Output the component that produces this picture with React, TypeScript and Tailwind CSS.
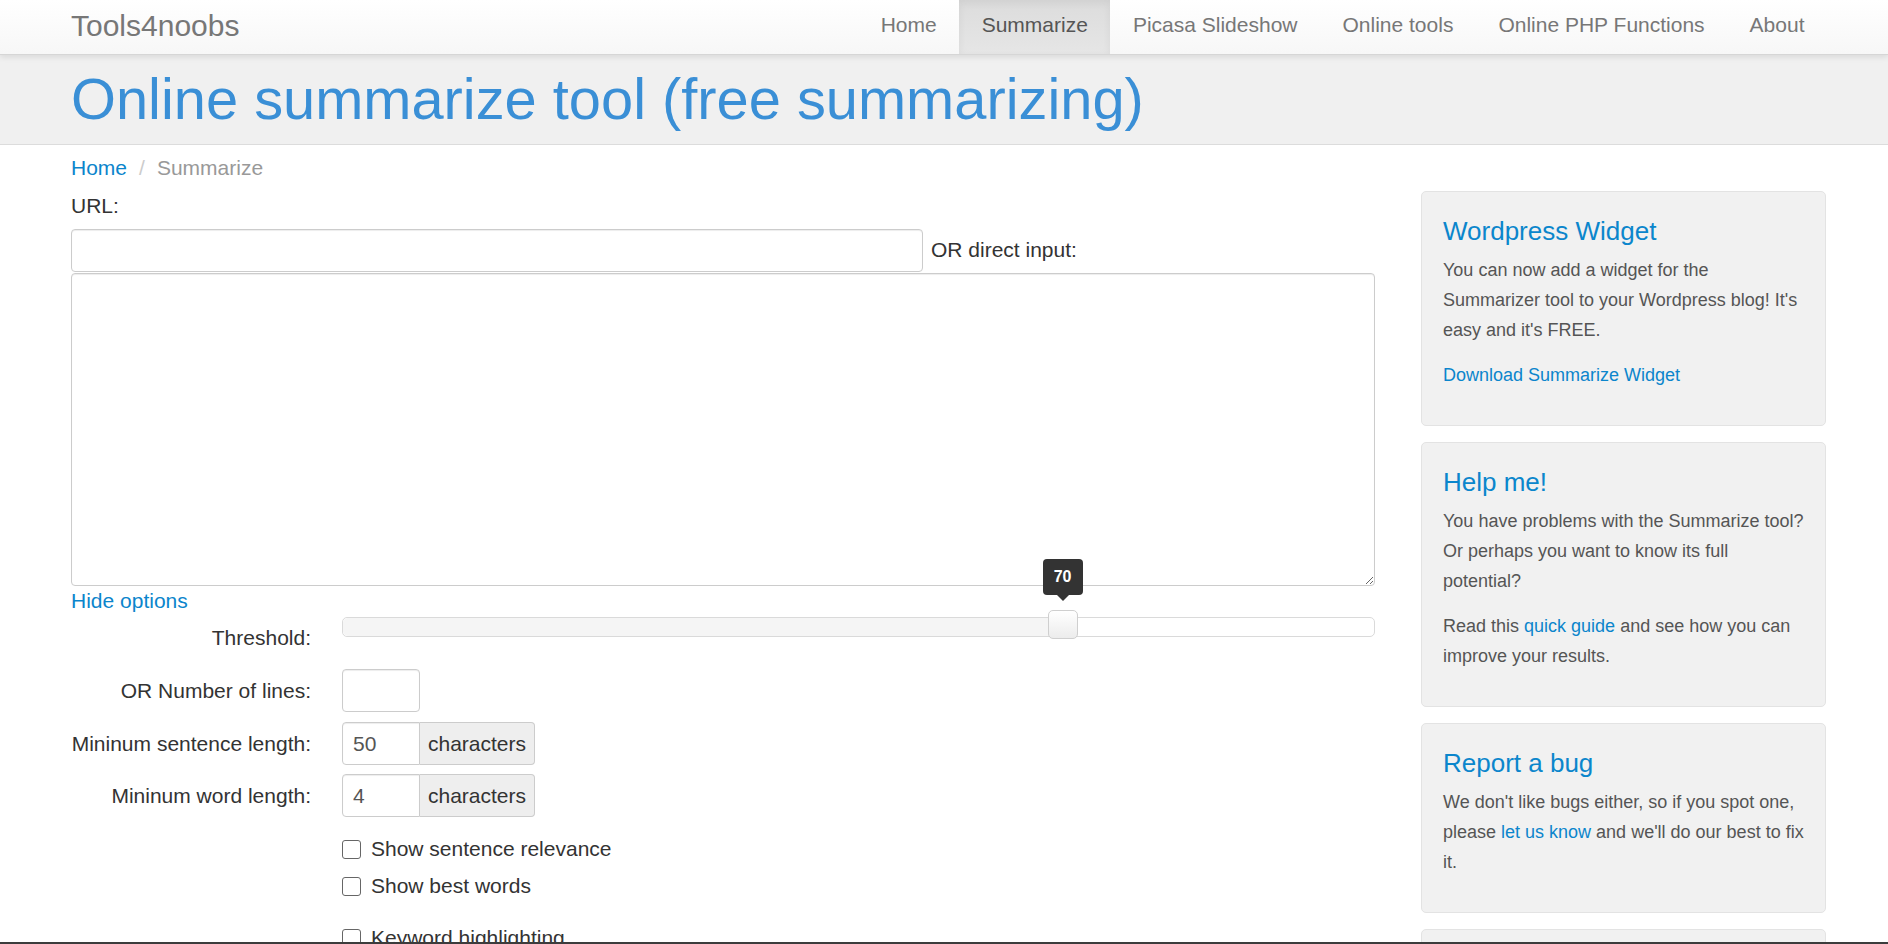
import React from "react";

function NavItem({ label, active }: { label: string; active?: boolean }) {
  return (
    <li
      className={
        active
          ? "flex items-center pb-[4px] px-[22.5px] text-[21px] text-[#555] bg-linear-to-b from-[#dcdcdc] to-[#e6e6e6] shadow-[inset_0_3px_9px_rgba(0,0,0,0.06)]"
          : "flex items-center pb-[4px] px-[22.5px] text-[21px] text-[#777]"
      }
    >
      {label}
    </li>
  );
}

function Well({ title, children, className }: { title?: string; children?: React.ReactNode; className?: string }) {
  return (
    <div
      className={
        "border border-[#e3e3e3] rounded-[5px] bg-[#f1f1f1] pt-[25px] pb-[20px] pl-[21px] pr-[19px] " + (className || "")
      }
    >
      {title && <h3 className="text-[26px] leading-[29px] text-[#0b86cc] mb-[9px]">{title}</h3>}
      {children}
    </div>
  );
}

function InputGroup({ value }: { value: string }) {
  return (
    <div className="flex h-[43px]">
      <input
        readOnly
        value={value}
        className="w-[78px] h-[43px] border border-[#ccc] rounded-l-[4px] px-[10px] text-[21px] text-[#555] bg-white outline-none shadow-[inset_0_1px_1px_rgba(0,0,0,0.075)]"
      />
      <div className="h-[43px] flex items-center px-[8px] border border-l-0 border-[#ccc] bg-[#eee] rounded-r-[4px] text-[21px] text-[#333]">
        characters
      </div>
    </div>
  );
}

function Check({ label, className }: { label: string; className?: string }) {
  return (
    <div className={"flex items-center pl-[271px] leading-[30px] " + (className || "")}>
      <span className="w-[19px] h-[19px] border-[1.5px] border-[#666] rounded-[3px] bg-white inline-block" />
      <span className="ml-[10px] text-[21px] text-[#333]">{label}</span>
    </div>
  );
}

export default function App() {
  return (
    <div className="min-h-screen bg-white font-['Liberation_Sans',Arial,Helvetica,sans-serif] text-[#333]">
      {/* Navbar */}
      <div className="relative z-10 h-[55px] border-b border-[#d6d6d6] bg-linear-to-b from-white to-[#f7f7f7] shadow-[0_2px_6px_rgba(0,0,0,0.10)] flex items-stretch justify-between pl-[71px] pr-[61px]">
        <div className="flex items-center pb-[4px] text-[30px] text-[#777]">Tools4noobs</div>
        <ul className="flex items-stretch">
          <NavItem label="Home" />
          <NavItem label="Summarize" active />
          <NavItem label="Picasa Slideshow" />
          <NavItem label="Online tools" />
          <NavItem label="Online PHP Functions" />
          <NavItem label="About" />
        </ul>
      </div>

      {/* Header */}
      <div className="bg-[#f0f0f0] border-b border-[#dcdcdc] pl-[71px] pt-[12px] pb-[13px]">
        <h1 className="text-[57.8px] leading-[64px] text-[#3a8fd6]">Online summarize tool (free summarizing)</h1>
      </div>

      <div className="pl-[71px]">
        {/* Breadcrumb */}
        <div className="pt-[8px] leading-[30px] text-[21px] flex">
          <span className="text-[#0b85cc]">Home</span>
          <span className="px-[12px] text-[#ccc]">/</span>
          <span className="text-[#999]">Summarize</span>
        </div>

        <div className="mt-[8px] flex gap-[46px] items-start">
          {/* Main column */}
          <div className="w-[1304px] text-[21px]">
            <div className="leading-[30px]">URL:</div>
            <div className="mt-[8px] flex items-center">
              <input
                readOnly
                className="w-[852px] h-[43px] border border-[#ccc] rounded-[4px] bg-white outline-none shadow-[inset_0_1px_1px_rgba(0,0,0,0.075)]"
              />
              <span className="ml-[8px] pb-[2px]">OR direct input:</span>
            </div>
            <textarea
              readOnly
              className="block mt-[1px] w-full h-[313px] border border-[#ccc] rounded-[4px] bg-white outline-none shadow-[inset_0_1px_1px_rgba(0,0,0,0.075)]"
            />
            <div className="leading-[30px] text-[#0b85cc]">Hide options</div>

            {/* Threshold */}
            <div className="flex h-[53px]">
              <div className="w-[240px] text-right pt-[7px] leading-[30px]">Threshold:</div>
              <div className="ml-[31px] flex-1 pt-[1px]">
                <div className="relative h-[20px] rounded-[5px] border border-[#dadada] bg-white">
                  <div className="absolute left-0 top-0 bottom-0 w-[70%] bg-[#f5f5f5] rounded-l-[5px]" />
                  <div className="absolute left-[69.8%] top-[-8px] -translate-x-1/2 w-[30px] h-[29px] rounded-[5px] border border-[#cfcfcf] bg-linear-to-b from-white to-[#ececec]" />
                  <div className="absolute left-[69.8%] top-[-59px] -translate-x-1/2 flex flex-col items-center">
                    <div className="w-[40px] h-[36px] rounded-[4px] bg-[#333] text-white text-[16px] font-bold flex items-center justify-center">
                      70
                    </div>
                    <div className="w-0 h-0 border-l-[6px] border-r-[6px] border-t-[6px] border-l-transparent border-r-transparent border-t-[#333]" />
                  </div>
                </div>
              </div>
            </div>

            {/* Number of lines */}
            <div className="flex items-center h-[43px]">
              <div className="w-[240px] text-right">OR Number of lines:</div>
              <input
                readOnly
                className="ml-[31px] w-[78px] h-[43px] border border-[#ccc] rounded-[4px] bg-white outline-none shadow-[inset_0_1px_1px_rgba(0,0,0,0.075)]"
              />
            </div>

            <div className="mt-[10px] flex items-center h-[43px]">
              <div className="w-[240px] text-right">Mininum sentence length:</div>
              <div className="ml-[31px]">
                <InputGroup value="50" />
              </div>
            </div>

            <div className="mt-[9px] flex items-center h-[43px]">
              <div className="w-[240px] text-right">Mininum word length:</div>
              <div className="ml-[31px]">
                <InputGroup value="4" />
              </div>
            </div>

            <Check label="Show sentence relevance" className="mt-[17px]" />
            <Check label="Show best words" className="mt-[7px]" />
            <Check label="Keyword highlighting" className="mt-[22px]" />
            <div className="h-[200px]" />
          </div>

          {/* Sidebar */}
          <div className="w-[405px] flex flex-col gap-[16px]">
            <Well title="Wordpress Widget">
              <p className="text-[18px] leading-[30px] text-[#555] mb-[15px]">
                You can now add a widget for the Summarizer tool to your Wordpress blog! It's easy and it's FREE.
              </p>
              <p className="text-[18px] leading-[30px] text-[#0b85cc] mb-[15px]">Download Summarize Widget</p>
            </Well>
            <Well title="Help me!">
              <p className="text-[18px] leading-[30px] text-[#555] mb-[15px]">
                You have problems with the Summarize tool? Or perhaps you want to know its full potential?
              </p>
              <p className="text-[18px] leading-[30px] text-[#555] mb-[15px]">
                Read this <span className="text-[#0b85cc]">quick guide</span> and see how you can improve your results.
              </p>
            </Well>
            <Well title="Report a bug">
              <p className="text-[18px] leading-[30px] text-[#555] mb-[15px]">
                We don't like bugs either, so if you spot one, please <span className="text-[#0b85cc]">let us know</span> and
                we'll do our best to fix it.
              </p>
            </Well>
            <Well className="h-[200px]" />
          </div>
        </div>
      </div>

      <div className="fixed left-0 right-0 bottom-0 h-[2px] bg-[#3c3c3c]" />
    </div>
  );
}
